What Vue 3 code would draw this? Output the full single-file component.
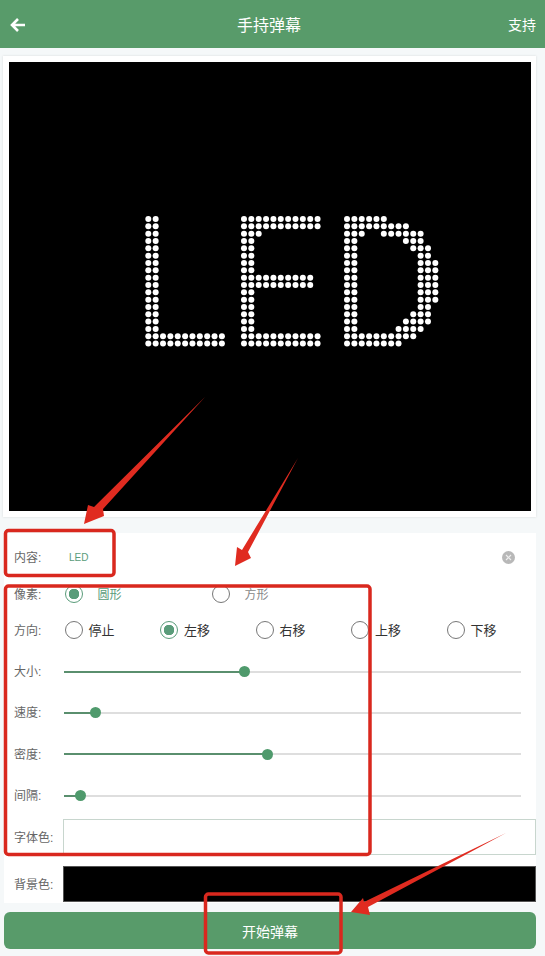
<template>
  <div class="page">
    <header class="topbar">
      <svg class="back" width="18" height="18" viewBox="0 0 18 18">
        <path d="M16 9H3M9 3L3 9l6 6" fill="none" stroke="#fff" stroke-width="2.6" />
      </svg>
      <span class="title">手持弹幕</span>
      <span class="support">支持</span>
    </header>

    <div class="screen-card">
      <svg class="screen" width="522" height="449" viewBox="0 0 522 449">
        <circle v-for="d in dots" :key="d.id" :cx="d.x" :cy="d.y" r="3" fill="#fff" />
      </svg>
    </div>

    <section class="panel">
      <div class="row content-row">
        <span class="label">内容:</span>
        <span class="content-value">LED</span>
        <svg class="clear" width="13" height="13" viewBox="0 0 13 13">
          <circle cx="6.5" cy="6.5" r="6.5" fill="#b8b8b8" />
          <path d="M4 4l5 5M9 4l-5 5" stroke="#eee" stroke-width="1.2" />
        </svg>
      </div>

      <div class="row">
        <span class="label radio-label">像素:</span>
        <div class="pixel-options">
          <div v-for="opt in pixelOptions" :key="opt.text" class="pixel-option">
            <span class="radio" :class="{ on: opt.on }"></span>
            <span class="pixel-text" :class="{ on: opt.on }">{{ opt.text }}</span>
          </div>
        </div>
      </div>

      <div class="row">
        <span class="label radio-label">方向:</span>
        <div class="dir-options">
          <div v-for="opt in dirOptions" :key="opt.text" class="dir-option">
            <span class="radio" :class="{ on: opt.on }"></span>
            <span class="dir-text">{{ opt.text }}</span>
          </div>
        </div>
      </div>

      <div class="sliders">
        <div v-for="s in sliders" :key="s.label" class="row slider-row">
          <span class="label">{{ s.label }}:</span>
          <div class="track">
            <div class="fill" :style="{ width: s.value + '%' }">
              <span class="thumb"></span>
            </div>
          </div>
        </div>
      </div>

      <div class="color-row font-color">
        <span class="label">字体色:</span>
        <div class="swatch white"></div>
      </div>
      <div class="color-row bg-color">
        <span class="label">背景色:</span>
        <div class="swatch black"></div>
      </div>
    </section>

    <button class="start">开始弹幕</button>

    <!-- annotations drawn over the screenshot -->
    <svg class="marks" width="545" height="956" viewBox="0 0 545 956">
      <g fill="none" stroke="#d9281e" stroke-width="3.5">
        <rect x="5.5" y="530.5" width="108.5" height="45" rx="3" />
        <rect x="5.5" y="586" width="364.5" height="268.5" rx="3" />
        <rect x="205.5" y="894" width="135.5" height="59" rx="3" />
      </g>
      <g fill="#e02b20">
        <path d="M205 397L103 509 104 516 84 524 88 505 94 507Z" />
        <path d="M298 458L248 552 251 558 235 566 237 547 242 550Z" />
        <path d="M506 833L368 907 370 915 351 912 363 898 364 902Z" />
      </g>
    </svg>
  </div>
</template>

<script setup>
const glyphs = [
  {
    col: 0,
    rows: [
      '11', '11', '11', '11', '11', '11', '11', '11', '11',
      '11', '11', '11', '11', '11', '11', '11',
      '11111111111', '11111111111'
    ]
  },
  {
    col: 13,
    rows: [
      '11111111111', '11111111111', '111', '11', '11', '11', '11', '11',
      '1111111111', '1111111111', '11', '11', '11', '11', '11', '11',
      '11111111111', '11111111111'
    ]
  },
  {
    col: 27,
    rows: [
      '111111',
      '111111111',
      '11100111111',
      '11000000111',
      '110000000111',
      '110000000011',
      '1100000000111',
      '1100000000111',
      '1100000000111',
      '1100000000111',
      '1100000000111',
      '1100000000111',
      '110000000011',
      '110000000111',
      '110000001111',
      '11000001111',
      '1111111111',
      '11111111'
    ]
  }
]

const dots = []
glyphs.forEach((g) => {
  g.rows.forEach((line, r) => {
    line.split('').forEach((c, i) => {
      if (c === '1') {
        dots.push({
          id: g.col + '-' + r + '-' + i,
          x: 139.3 + (g.col + i) * 7.36,
          y: 157 + r * 7.33
        })
      }
    })
  })
})

const pixelOptions = [
  { text: '圆形', on: true },
  { text: '方形', on: false }
]

const dirOptions = [
  { text: '停止', on: false },
  { text: '左移', on: true },
  { text: '右移', on: false },
  { text: '上移', on: false },
  { text: '下移', on: false }
]

const sliders = [
  { label: '大小', value: 39.4 },
  { label: '速度', value: 7 },
  { label: '密度', value: 44.6 },
  { label: '间隔', value: 3.7 }
]
</script>

<style scoped>
.page {
  position: relative;
  width: 545px;
  height: 956px;
  overflow: hidden;
  background: #f5f8f9;
  font-family: "Liberation Sans", "Noto Sans CJK SC", sans-serif;
}

.topbar {
  height: 48px;
  background: #589b6a;
  color: #fff;
  display: flex;
  align-items: center;
  justify-content: space-between;
  padding: 0 9px;
  box-sizing: border-box;
}

.back {
  margin-top: 1px;
}

.title {
  font-size: 16px;
  margin-left: 3px;
}

.support {
  font-size: 14px;
}

.screen-card {
  margin: 8px 9px 0 3px;
  padding: 6px 5px 6px 6px;
  background: #fff;
  box-shadow: 0 0 2px #d5d8d8;
}

.screen {
  display: block;
  background: #000;
}

.panel {
  margin: 16px 9px 0 4px;
  background: #fff;
}

.row {
  display: flex;
  align-items: center;
  height: 36px;
  padding-left: 10px;
}

.label {
  font-size: 12px;
  color: #666;
  flex: none;
  width: 48px;
  margin-top: -2px;
}

.radio-label {
  width: 50.5px;
}

.content-row {
  height: 38px;
  padding-top: 5px;
}

.content-value {
  font-size: 10px;
  color: #5a9c7a;
  margin-left: 7px;
}

.clear {
  margin-left: auto;
  margin-right: 21.5px;
}

.pixel-options {
  display: flex;
}

.pixel-option {
  width: 147px;
  display: flex;
  align-items: center;
}

.radio {
  box-sizing: border-box;
  width: 18px;
  height: 18px;
  flex: none;
  border: 1.5px solid #777;
  border-radius: 50%;
  background: #fff;
}

.radio.on {
  border-color: #5a9c7a;
  background: radial-gradient(circle, #5a9c7a 0 5px, #fff 5.5px);
}

.pixel-text {
  font-size: 12px;
  color: #888;
  margin-left: 15px;
  margin-top: -2px;
}

.pixel-text.on {
  color: #5a9c7a;
}

.dir-options {
  display: flex;
}

.dir-option {
  width: 95.5px;
  display: flex;
  align-items: center;
}

.dir-text {
  font-size: 13px;
  color: #333;
  margin-left: 6px;
  margin-top: -2px;
}

.sliders {
  margin-top: 3px;
}

.slider-row {
  height: 41.3px;
}

.track {
  width: 457px;
  margin-left: 2px;
  height: 2px;
  background: #dedede;
}

.fill {
  position: relative;
  height: 100%;
  background: #5a8f6e;
}

.thumb {
  position: absolute;
  right: -5.5px;
  top: -4.5px;
  width: 11px;
  height: 11px;
  border-radius: 50%;
  background: #4f9a6c;
}

.color-row {
  display: flex;
  align-items: center;
  height: 36px;
  padding-left: 10px;
}

.font-color {
  margin-top: 3px;
}

.bg-color {
  margin-top: 11px;
  padding-bottom: 1px;
}

.color-row .label {
  width: 48.5px;
}

.swatch {
  flex: 1;
  height: 100%;
  box-sizing: border-box;
  border: 1px solid #c8d6ce;
}

.swatch.white {
  background: #fff;
}

.swatch.black {
  background: #000;
  border-color: #555;
}

.start {
  display: block;
  width: 532px;
  height: 37px;
  margin: 9px 0 0 4px;
  border: none;
  border-radius: 6px;
  background: #589b6a;
  color: #fff;
  font-family: inherit;
  font-size: 14px;
}

.marks {
  position: absolute;
  left: 0;
  top: 0;
  pointer-events: none;
}
</style>
